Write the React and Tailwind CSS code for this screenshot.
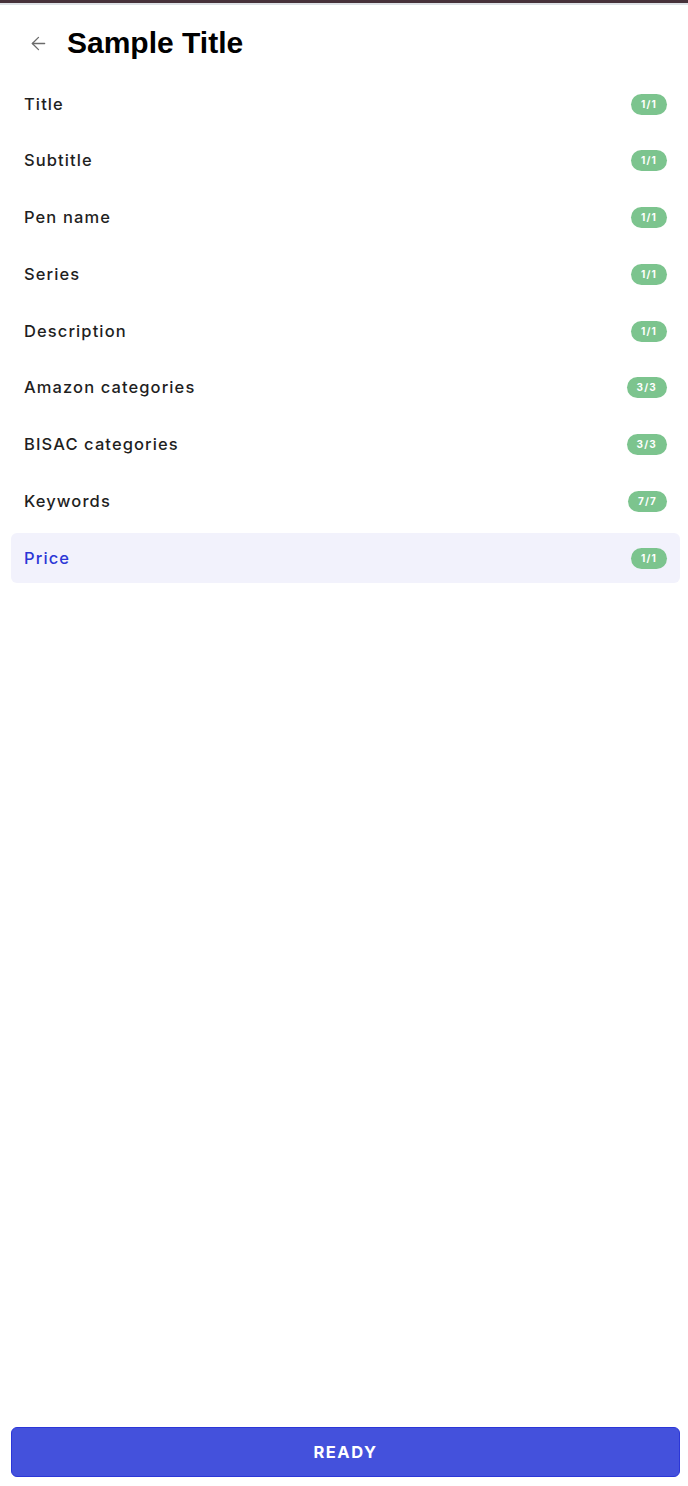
import { ArrowLeft } from "lucide-react";

const sections = [
  { label: "Title", count: "1/1" },
  { label: "Subtitle", count: "1/1" },
  { label: "Pen name", count: "1/1" },
  { label: "Series", count: "1/1" },
  { label: "Description", count: "1/1" },
  { label: "Amazon categories", count: "3/3" },
  { label: "BISAC categories", count: "3/3" },
  { label: "Keywords", count: "7/7" },
  { label: "Price", count: "1/1", active: true },
];

function Badge({ children }) {
  return (
    <span className="flex h-[21px] items-center rounded-full bg-[#7cc48e] px-[10px] text-[10px] font-bold tracking-[1.2px] text-white">
      {children}
    </span>
  );
}

export default function App() {
  return (
    <div className="flex h-[1486px] w-full flex-col bg-white font-['Inter',sans-serif]">
      <div className="h-[3px] bg-[#46313a]" />
      <div className="h-[2px] bg-[#dde1e6]" />

      <header className="flex items-center gap-[18px] px-[28px] pt-[20px] pb-[18px]">
        <ArrowLeft className="h-[21px] w-[21px] text-[#6b6b6b]" strokeWidth={1.5} />
        <h1 className="font-['Liberation_Sans',Arial,sans-serif] text-[30px] font-bold leading-[36px] text-black">
          Sample Title
        </h1>
      </header>

      <ul className="flex flex-col gap-[6.75px] pl-[11px] pr-[8px]">
        {sections.map((s) => (
          <li
            key={s.label}
            className={
              "flex h-[50px] items-center justify-between rounded-md pl-[13px] pr-[13px] " +
              (s.active ? "bg-[#f2f2fc]" : "")
            }
          >
            <span
              className={
                "text-[16.5px] font-medium tracking-[1.1px] " +
                (s.active ? "text-[#2c36d6]" : "text-[#1f1f1f]")
              }
            >
              {s.label}
            </span>
            <Badge>{s.count}</Badge>
          </li>
        ))}
      </ul>

      <div className="flex-1" />

      <div className="pl-[11px] pr-[8px] pb-[9px]">
        <button className="flex h-[50px] w-full items-center justify-center rounded-md border border-[#2b36d8] bg-[#4451dc] text-[16.5px] font-bold tracking-[1.5px] text-white">
          READY
        </button>
      </div>
    </div>
  );
}
